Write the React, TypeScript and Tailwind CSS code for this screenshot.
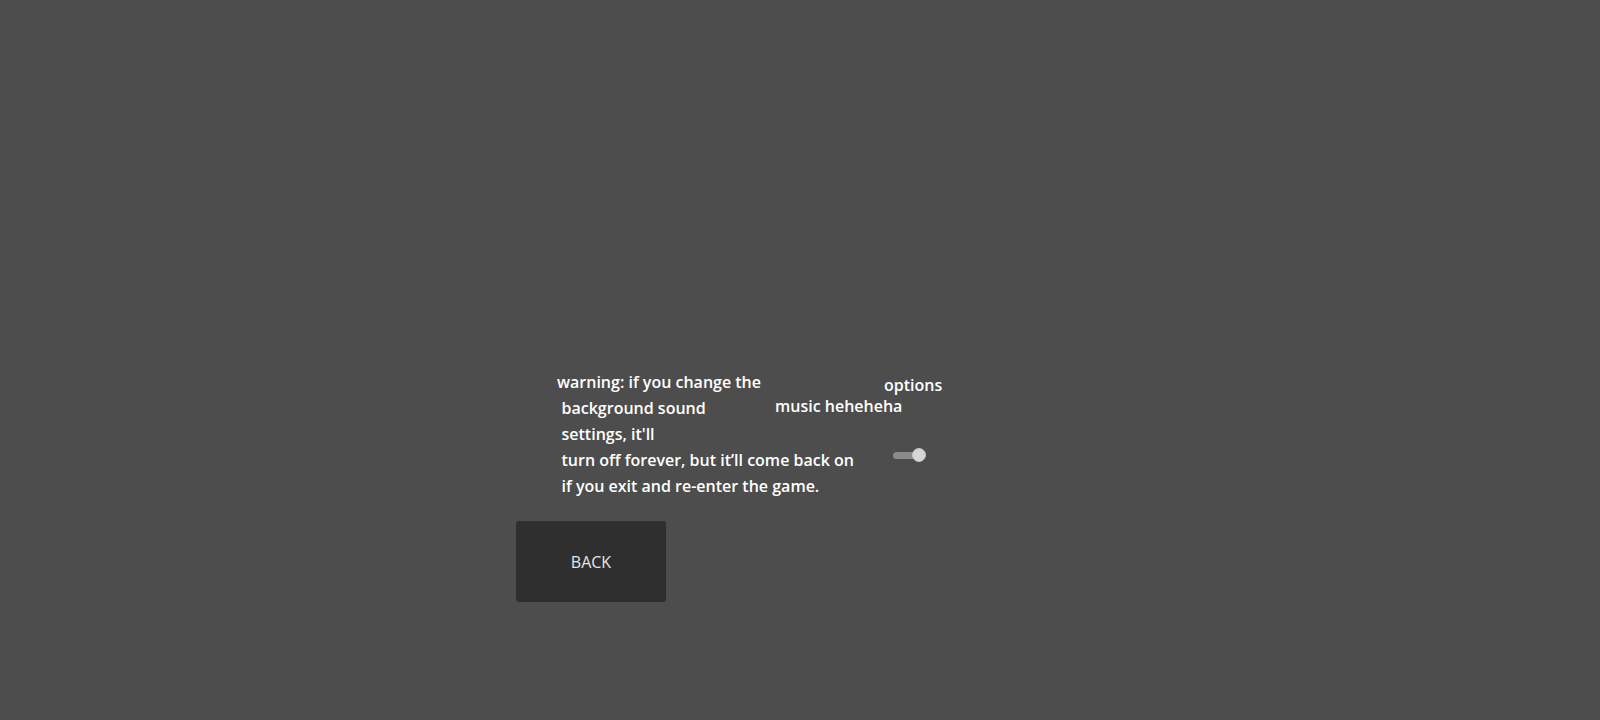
import React from "react";

export default function App() {
  return (
    <div className="min-h-screen w-full bg-[#4d4d4d] text-white font-['Open_Sans',sans-serif] text-[16px]">
      <div className="pt-[369px] pl-[516px]">
        <div className="flex">
          <div className="w-[259px] pl-[41px] leading-[26px] whitespace-nowrap font-semibold">
            <div>warning: if you change the</div>
            <div className="pl-[4.5px]">background sound</div>
            <div className="pl-[4.5px]">settings, it'll</div>
            <div className="pl-[4.5px]">turn off forever, but it’ll come back on</div>
            <div className="pl-[4.5px]">if you exit and re-enter the game.</div>
          </div>
          <div className="flex flex-col pt-[5.6px] leading-[21.8px] whitespace-nowrap font-semibold">
            <div className="pl-[109px]">options</div>
            <div>music heheheha</div>
            <div className="mt-[30px] pl-[118px] flex items-center">
              <div className="w-[26px] h-[7px] rounded-full bg-[#8a8a8a]" />
              <div className="-ml-[7px] w-[14px] h-[14px] rounded-full bg-[#d6d6d6] border border-[#c4c4c4]" />
            </div>
          </div>
        </div>
        <button className="mt-[22px] w-[150px] h-[81px] rounded-[3px] bg-[#2f2f2f] text-[#e4e4e4] text-[16px] flex items-center justify-center">
          BACK
        </button>
      </div>
    </div>
  );
}
